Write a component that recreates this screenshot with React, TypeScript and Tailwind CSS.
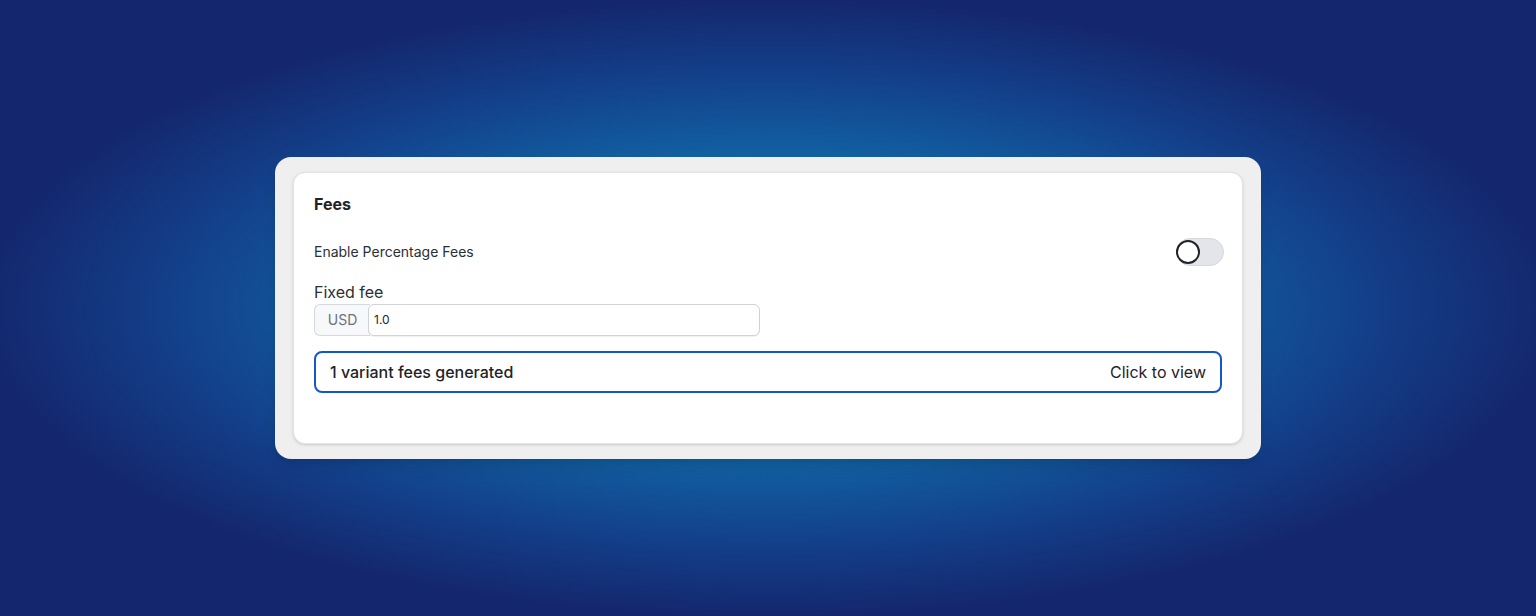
import { useState } from "react";

export default function App() {
  const [enabled, setEnabled] = useState(false);
  const [fee, setFee] = useState("1.0");

  return (
    <div className="flex h-[616px] w-full items-center justify-center bg-[radial-gradient(ellipse_51%_50%_at_50%_50%,#116fae_0%,#1166a6_45%,#13408a_76%,#14276e_100%)] font-['Inter',sans-serif]">
      <div className="w-[986px] rounded-2xl bg-[#efefef] px-[18px] py-[15px] shadow-lg">
        <div className="h-[272px] rounded-xl border border-[#e3e3e3] bg-white px-5 pt-[21px] shadow-[0_1px_3px_rgba(0,0,0,0.15)]">
          <h2 className="text-base font-bold leading-5 text-[#1f2329]">Fees</h2>

          <div className="mt-[24px] flex items-center justify-between">
            <span className="text-sm text-[#2b2f36]">Enable Percentage Fees</span>
            <button
              type="button"
              onClick={() => setEnabled(!enabled)}
              aria-pressed={enabled}
              className={`relative -mr-[2px] h-[28px] w-[48px] rounded-full border border-[#d5d8dd] ${
                enabled ? "bg-[#1158c7]" : "bg-[#e3e5ea]"
              }`}
            >
              <span
                className={`absolute top-[1px] h-[24px] w-[24px] rounded-full border-2 border-[#1f2329] bg-white ${
                  enabled ? "left-[21px]" : "left-[-1px]"
                }`}
              />
            </button>
          </div>

          <div className="mt-[16px]">
            <label className="block text-base leading-5 text-[#2b2f36]">Fixed fee</label>
            <div className="mt-[2px] flex h-[32px] w-[446px]">
              <span className="flex w-[56px] items-center justify-center rounded-l-md border border-r-0 border-[#d5d8dd] bg-[#f7f8fa] text-sm text-[#6b7280]">
                USD
              </span>
              <input
                value={fee}
                onChange={(e) => setFee(e.target.value)}
                className="-ml-[2px] flex-1 rounded-md border border-[#cfd2d8] bg-white px-[5px] text-xs text-[#1f2329] shadow-[0_1px_1px_rgba(0,0,0,0.06)] outline-none"
              />
            </div>
          </div>

          <button
            type="button"
            className="mt-[15px] flex h-[42px] w-full items-center justify-between rounded-lg border-2 border-[#1458c8] px-[14px] text-base text-[#1f2329]"
          >
            <span className="font-medium">1 variant fees generated</span>
            <span>Click to view</span>
          </button>
        </div>
      </div>
    </div>
  );
}
